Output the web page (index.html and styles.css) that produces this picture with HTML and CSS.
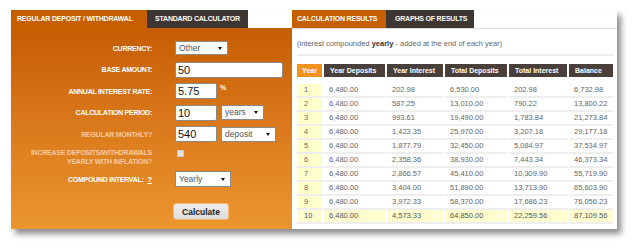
FILE: index.html
```html
<!DOCTYPE html>
<html>
<head>
<meta charset="utf-8">
<link rel="stylesheet" href="styles.css">
</head>
<body>
<div class="frame">
  <div class="left">
    <div class="tabs">
      <div class="tab tab-active tab-l1">REGULAR DEPOSIT / WITHDRAWAL</div>
      <div class="tab tab-dark tab-l2">STANDARD CALCULATOR</div>
    </div>
    <div class="form">
      <div class="row">
        <div class="label">CURRENCY:</div>
        <div class="ctrl"><div class="select sel-currency"><span>Other</span><span class="arrow"></span></div></div>
      </div>
      <div class="row">
        <div class="label">BASE AMOUNT:</div>
        <div class="ctrl"><div class="input in-wide">50</div></div>
      </div>
      <div class="row">
        <div class="label">ANNUAL INTEREST RATE:</div>
        <div class="ctrl"><div class="input in-small">5.75</div><span class="pct">%</span></div>
      </div>
      <div class="row">
        <div class="label">CALCULATION PERIOD:</div>
        <div class="ctrl"><div class="input in-small">10</div><div class="select sel-years"><span>years</span><span class="arrow"></span></div></div>
      </div>
      <div class="row">
        <div class="label label-dim">REGULAR MONTHLY?</div>
        <div class="ctrl"><div class="input in-small">540</div><div class="select sel-deposit"><span>deposit</span><span class="arrow"></span></div></div>
      </div>
      <div class="row row-tall">
        <div class="label label-dim">INCREASE DEPOSITS/WITHDRAWALS<br>YEARLY WITH INFLATION?</div>
        <div class="ctrl ctrl-top"><span class="checkbox"></span></div>
      </div>
      <div class="row">
        <div class="label">COMPOUND INTERVAL: <span class="help">?</span></div>
        <div class="ctrl"><div class="select sel-yearly"><span>Yearly</span><span class="arrow"></span></div></div>
      </div>
      <div class="row row-btn">
        <div class="label"></div>
        <div class="ctrl"><button class="btn">Calculate</button></div>
      </div>
    </div>
  </div>
  <div class="right">
    <div class="tabs tabs-r">
      <div class="tab tab-active tab-r1">CALCULATION RESULTS</div>
      <div class="tab tab-dark tab-r2">GRAPHS OF RESULTS</div>
    </div>
    <div class="results">
      <p class="note">(interest compounded <b>yearly</b> - added at the end of each year)</p>
      <table class="grid">
        <thead>
          <tr><th class="c-year">Year</th><th class="c-yd">Year Deposits</th><th class="c-yi">Year Interest</th><th class="c-td">Total Deposits</th><th class="c-ti">Total Interest</th><th class="c-bal">Balance</th></tr>
        </thead>
        <tbody>
          <tr><td class="yr">1</td><td>6,480.00</td><td>202.98</td><td>6,530.00</td><td>202.98</td><td>6,732.98</td></tr>
          <tr><td class="yr">2</td><td>6,480.00</td><td>587.25</td><td>13,010.00</td><td>790.22</td><td>13,800.22</td></tr>
          <tr><td class="yr">3</td><td>6,480.00</td><td>993.61</td><td>19,490.00</td><td>1,783.84</td><td>21,273.84</td></tr>
          <tr><td class="yr">4</td><td>6,480.00</td><td>1,423.35</td><td>25,970.00</td><td>3,207.18</td><td>29,177.18</td></tr>
          <tr><td class="yr">5</td><td>6,480.00</td><td>1,877.79</td><td>32,450.00</td><td>5,084.97</td><td>37,534.97</td></tr>
          <tr><td class="yr">6</td><td>6,480.00</td><td>2,358.36</td><td>38,930.00</td><td>7,443.34</td><td>46,373.34</td></tr>
          <tr><td class="yr">7</td><td>6,480.00</td><td>2,866.57</td><td>45,410.00</td><td>10,309.90</td><td>55,719.90</td></tr>
          <tr><td class="yr">8</td><td>6,480.00</td><td>3,404.00</td><td>51,890.00</td><td>13,713.90</td><td>65,603.90</td></tr>
          <tr><td class="yr">9</td><td>6,480.00</td><td>3,972.33</td><td>58,370.00</td><td>17,686.23</td><td>76,056.23</td></tr>
          <tr class="last"><td class="yr">10</td><td>6,480.00</td><td>4,573.33</td><td>64,850.00</td><td>22,259.56</td><td>87,109.56</td></tr>
        </tbody>
      </table>
    </div>
  </div>
</div>
</body>
</html>
```
FILE: styles.css
```css
* { box-sizing: border-box; }
html, body { margin: 0; padding: 0; background: #fff; }
body { font-family: "Liberation Sans", Arial, sans-serif; width: 640px; height: 252px; overflow: hidden; }

.frame {
  margin: 10px 0 0 11px;
  width: 606px;
  height: 219px;
  display: flex;
  background: #fff;
  box-shadow: 4px 5px 6px rgba(0,0,0,0.45);
}

.left { width: 281px; display: flex; flex-direction: column; }
.right { width: 325px; display: flex; flex-direction: column; }

.tabs { height: 18px; display: flex; flex: none; }
.tabs-r { height: 19px; border-bottom: 1px solid #ddd; }
.tab {
  height: 18px;
  line-height: 18px;
  color: #fff;
  font-weight: bold;
  font-size: 7px;
  letter-spacing: -0.2px;
  white-space: nowrap;
}
.tab-active { background: #c65f00; }
.tab-dark { background: #3e3632; }
.tab-l1 { width: 136px; padding-left: 6px; }
.tab-l2 { width: 101px; padding-left: 8px; }
.tab-r1 { width: 94px; padding-left: 5px; }
.tab-r2 { width: 88px; padding-left: 9px; }

.form {
  flex: 1;
  background: linear-gradient(180deg, #c65d02 0%, #d9771a 45%, #eb962f 100%);
  padding-top: 12px;
  display: flex;
  flex-direction: column;
  gap: 5.5px;
}
.row { display: flex; align-items: center; height: 16px; }
.row-tall { height: 18px; align-items: flex-start; }
.row-btn { height: 17px; margin-top: 10.5px; }
.label {
  width: 141px;
  flex: none;
  text-align: right;
  color: #fff;
  font-weight: bold;
  font-size: 7px;
  letter-spacing: -0.25px;
  line-height: 9px;
  margin-right: 23px;
}
.label-dim { color: #f7caa0; }
.help { text-decoration: underline; font-size: 8px; margin-left: 2px; }
.ctrl { display: flex; align-items: center; gap: 4px; height: 100%; }
.ctrl-top { align-items: flex-start; padding-top: 2px; }

.input {
  height: 16px;
  background: #fff;
  border: 1px solid #8a8a8a;
  border-radius: 2px;
  font-size: 11px;
  line-height: 14px;
  color: #111;
  padding-left: 2px;
}
.in-wide { width: 108px; }
.in-small { width: 42px; }
.pct { color: #fff; font-weight: bold; font-size: 7px; align-self: flex-start; margin-top: 1px; margin-left: -1px; }

.select {
  height: 15px;
  background: #fff;
  border: 1px solid #8a8a8a;
  font-size: 8.5px;
  line-height: 13px;
  color: #555;
  padding-left: 3px;
  display: flex;
  justify-content: space-between;
  align-items: center;
  padding-right: 5px;
}
.arrow {
  width: 0; height: 0;
  border-left: 2px solid transparent;
  border-right: 2px solid transparent;
  border-top: 3px solid #111;
}
.sel-currency { width: 53px; height: 14px; }
.sel-years { width: 43px; }
.sel-deposit { width: 55px; }
.sel-yearly { width: 56px; height: 16px; }

.checkbox {
  display: block;
  width: 7px; height: 7px;
  margin-left: 2px;
  background: #e4e4e4;
  border: 1px solid #c8c8c8;
}

.btn {
  width: 56px;
  height: 17px;
  margin-left: -2px;
  padding: 0;
  font-family: "Liberation Sans", Arial, sans-serif;
  font-weight: bold;
  font-size: 8.5px;
  color: #222;
  background: linear-gradient(180deg, #ececec, #dcdcdc);
  border: 1px solid #f6b872;
  border-radius: 3px;
}

.results { padding: 10px 4px 0 5px; }
.note {
  margin: 0;
  font-size: 7.5px;
  line-height: 10px;
  color: #666;
  padding-bottom: 5px;
  border-bottom: 2px solid #ececec;
}
.note b { color: #333; }

.grid {
  margin-top: 8px;
  width: 316px;
  border-collapse: separate;
  border-spacing: 0;
  table-layout: fixed;
  font-size: 7.5px;
}
.grid th {
  height: 20px;
  padding: 0 0 0 6px;
  text-align: left;
  color: #fff;
  background: #4a403b;
  background-clip: padding-box;
  font-weight: bold;
  font-size: 7px;
  line-height: 13px;
  border-right: 2px solid #fff;
  border-bottom: 7px solid #fff;
  white-space: nowrap;
}
.grid th:last-child, .grid td:last-child { border-right: 0; }
.grid th.c-year { background: #f0921e; padding-left: 0; text-align: center; background-clip: padding-box; }
.c-year { width: 27px; }
.c-yd { width: 63px; }
.c-yi { width: 58px; }
.c-td { width: 64px; }
.c-ti { width: 60px; }
.c-bal { width: 44px; }
.grid td {
  height: 14px;
  padding: 0 0 0 5px;
  color: #666;
  line-height: 12px;
  border-bottom: 2px solid #eeeeee;
  border-right: 2px solid #fff;
  white-space: nowrap;
}
.grid td.yr { background: #ffffcc; background-clip: padding-box; padding-left: 7px; }
.grid tr.last td { background: #fffdd0; color: #555; background-clip: padding-box; }
```
